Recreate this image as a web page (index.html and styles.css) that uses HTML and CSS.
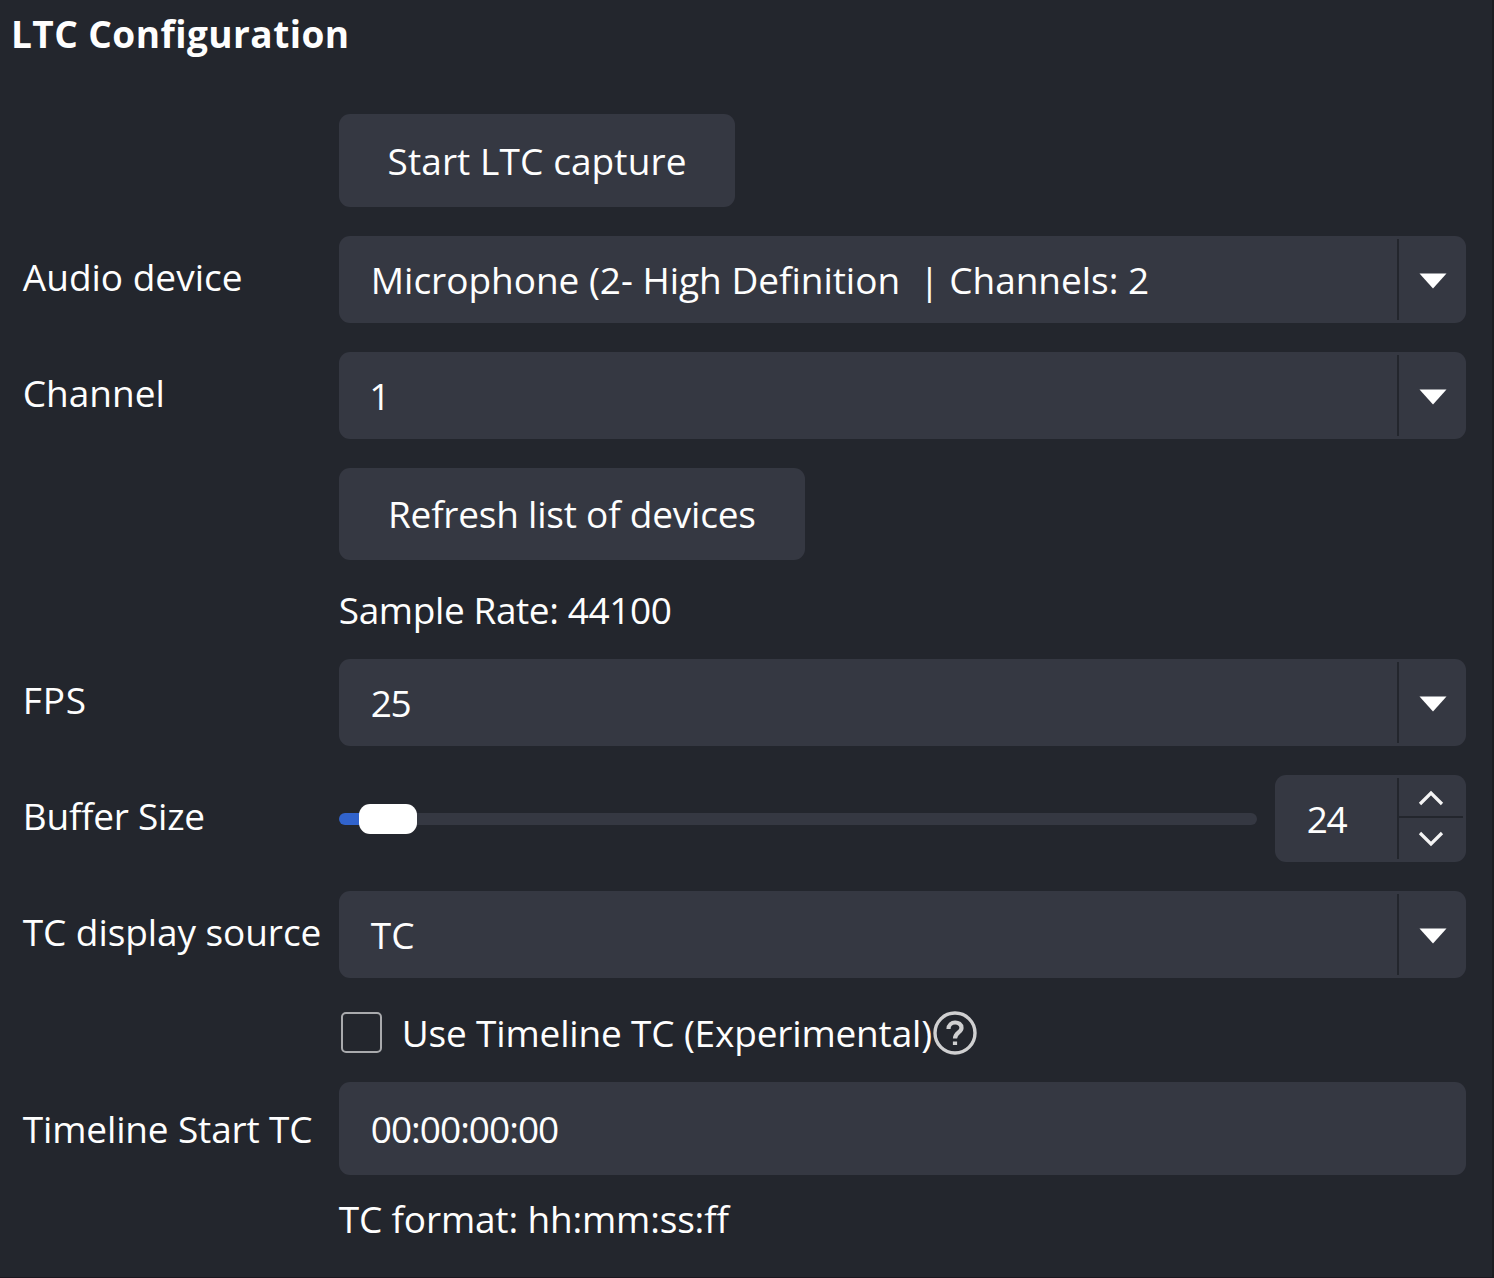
FILE: index.html
```html
<!DOCTYPE html>
<html lang="en">
<head>
<meta charset="utf-8">
<title>LTC Configuration</title>
<link rel="stylesheet" href="styles.css">
</head>
<body>
<main class="panel">
  <h1 class="title">LTC Configuration</h1>
  <div class="form">
    <button class="button push start" type="button">Start LTC capture</button>

    <span class="label">Audio device</span>
    <div class="select field">
      <span class="value t-mic">Microphone (2- High Definition &nbsp;| Channels: 2</span>
      <span class="drop"><svg class="arrow" viewBox="0 0 28 16"><path d="M0.5 0.5H27.5L14 15.5Z"/></svg></span>
    </div>

    <span class="label">Channel</span>
    <div class="select field">
      <span class="value t-one">1</span>
      <span class="drop"><svg class="arrow" viewBox="0 0 28 16"><path d="M0.5 0.5H27.5L14 15.5Z"/></svg></span>
    </div>

    <button class="button push refresh" type="button">Refresh list of devices</button>

    <span class="note push t-rate">Sample Rate: 44100</span>

    <span class="label t-fps">FPS</span>
    <div class="select field">
      <span class="value t-num">25</span>
      <span class="drop"><svg class="arrow" viewBox="0 0 28 16"><path d="M0.5 0.5H27.5L14 15.5Z"/></svg></span>
    </div>

    <span class="label t-buffer">Buffer Size</span>
    <div class="buffer">
      <div class="slider"><span class="fill"></span><span class="handle"></span><span class="groove"></span></div>
      <div class="spin field">
        <span class="value t-num">24</span>
        <span class="steps">
          <span class="step up"><svg class="chevron" viewBox="0 0 26 17"><path d="M2 14L13 3L24 14"/></svg></span>
          <span class="step down"><svg class="chevron" viewBox="0 0 26 17"><path d="M2 3L13 14L24 3"/></svg></span>
        </span>
      </div>
    </div>

    <span class="label t-display">TC display source</span>
    <div class="select field">
      <span class="value">TC</span>
      <span class="drop"><svg class="arrow" viewBox="0 0 28 16"><path d="M0.5 0.5H27.5L14 15.5Z"/></svg></span>
    </div>

    <div class="check push">
      <span class="box"></span>
      <span class="check-text">Use Timeline TC (Experimental)</span>
      <svg class="help" viewBox="0 0 46 46"><circle cx="23" cy="23" r="20"/><path class="mark" d="M16.5 19C16.5 10.5 29.5 10.5 29.5 18C29.5 22.5 23 22.5 23 28.5"/><path class="mark" d="M23 31.5V35"/></svg>
    </div>

    <span class="label level t-start">Timeline Start TC</span>
    <div class="field input"><span class="value t-zero">00:00:00:00</span></div>

    <span class="note push t-format">TC format: hh:mm:ss:ff</span>
  </div>
</main>
</body>
</html>
```
FILE: styles.css
```css
* { box-sizing: border-box; }

body {
  margin: 0;
  background: #23262d;
  color: #fefefe;
  font-family: "Open Sans", "Noto Sans", sans-serif;
  font-size: 37px;
  line-height: 50px;
}

.panel {
  height: 1278px;
  border-right: 2px solid #1b1d21;
  border-bottom: 1px solid #1b171f;
  overflow: hidden;
  white-space: nowrap;
}

.title {
  margin: 0;
  padding: 9px 0 0 11px;
  height: 114px;
  font-size: 37px;
  font-weight: 700;
  letter-spacing: 0.45px;
}

.form {
  display: grid;
  grid-template-columns: 316px 1127px;
  grid-template-rows: 93px 86.5px 86.5px 92px 41px 86.5px 86.5px 86.5px 46px 92.5px 30px;
  row-gap: 29.3px;
  padding-left: 22.8px;
}

.push { grid-column: 2; }

.label { align-self: center; padding-bottom: 5px; }
.level { padding: 1px 0 0; }

.button, .field {
  border: 0;
  border-radius: 11px;
  background: #353842;
}

.button {
  justify-self: start;
  padding: 0;
  color: inherit;
  font: inherit;
}

.start { width: 396.5px; letter-spacing: 0.1px; }
.refresh { width: 466px; letter-spacing: -0.22px; }

.field { display: flex; align-items: center; }
.value { flex: 1; padding-top: 1px; padding-left: 32px; }

.drop, .steps {
  width: 69px;
  height: calc(100% - 6px);
  border-left: 2.5px solid #23262d;
}

.drop { display: flex; align-items: center; justify-content: center; }
.arrow { width: 28px; height: 16px; margin-top: 3px; margin-left: 1px; fill: #ffffff; }

.buffer { display: flex; gap: 18px; }

.slider { flex: 1; display: flex; align-items: center; }
.fill { width: 24px; height: 12px; margin-right: -4px; border-radius: 6px 0 0 6px; background: #3163cc; }
.handle { z-index: 1; width: 58px; height: 30px; border-radius: 11px; background: #ffffff; }
.groove { flex: 1; height: 12px; margin-left: -4px; border-radius: 0 6px 6px 0; background: #353842; }

.spin { width: 191px; }
.steps { display: flex; flex-direction: column; padding-right: 3px; }
.step { flex: 1; display: flex; justify-content: center; }
.up { align-items: flex-end; padding-bottom: 9px; border-bottom: 2.5px solid #23262d; }
.down { align-items: flex-start; padding-top: 12px; }
.chevron { width: 26px; height: 17px; fill: none; stroke: #f4f4f4; stroke-width: 3.2; }

.check { display: flex; align-items: center; padding-top: 6px; }
.box { width: 41px; height: 41px; margin-left: 2px; border: 2.5px solid #a9aaad; border-radius: 5px; }
.check-text { margin-left: 20px; padding-top: 1px; letter-spacing: -0.17px; }
.help { width: 46px; height: 46px; margin-left: 0.5px; fill: none; stroke: #d0d0d1; stroke-width: 3.4; }
.mark { stroke-width: 4.2; }

.note { align-self: center; line-height: 32px; }

.t-mic { letter-spacing: -0.02px; }
.t-one { padding-left: 30.5px; }
.t-rate { letter-spacing: -0.4px; }
.t-fps { letter-spacing: 0.8px; }
.t-num { letter-spacing: -1.4px; }
.t-buffer { letter-spacing: -0.25px; }
.t-display { letter-spacing: -0.08px; }
.t-start { letter-spacing: -0.15px; }
.t-zero { letter-spacing: -1px; }
.t-format { letter-spacing: -0.17px; }
```
